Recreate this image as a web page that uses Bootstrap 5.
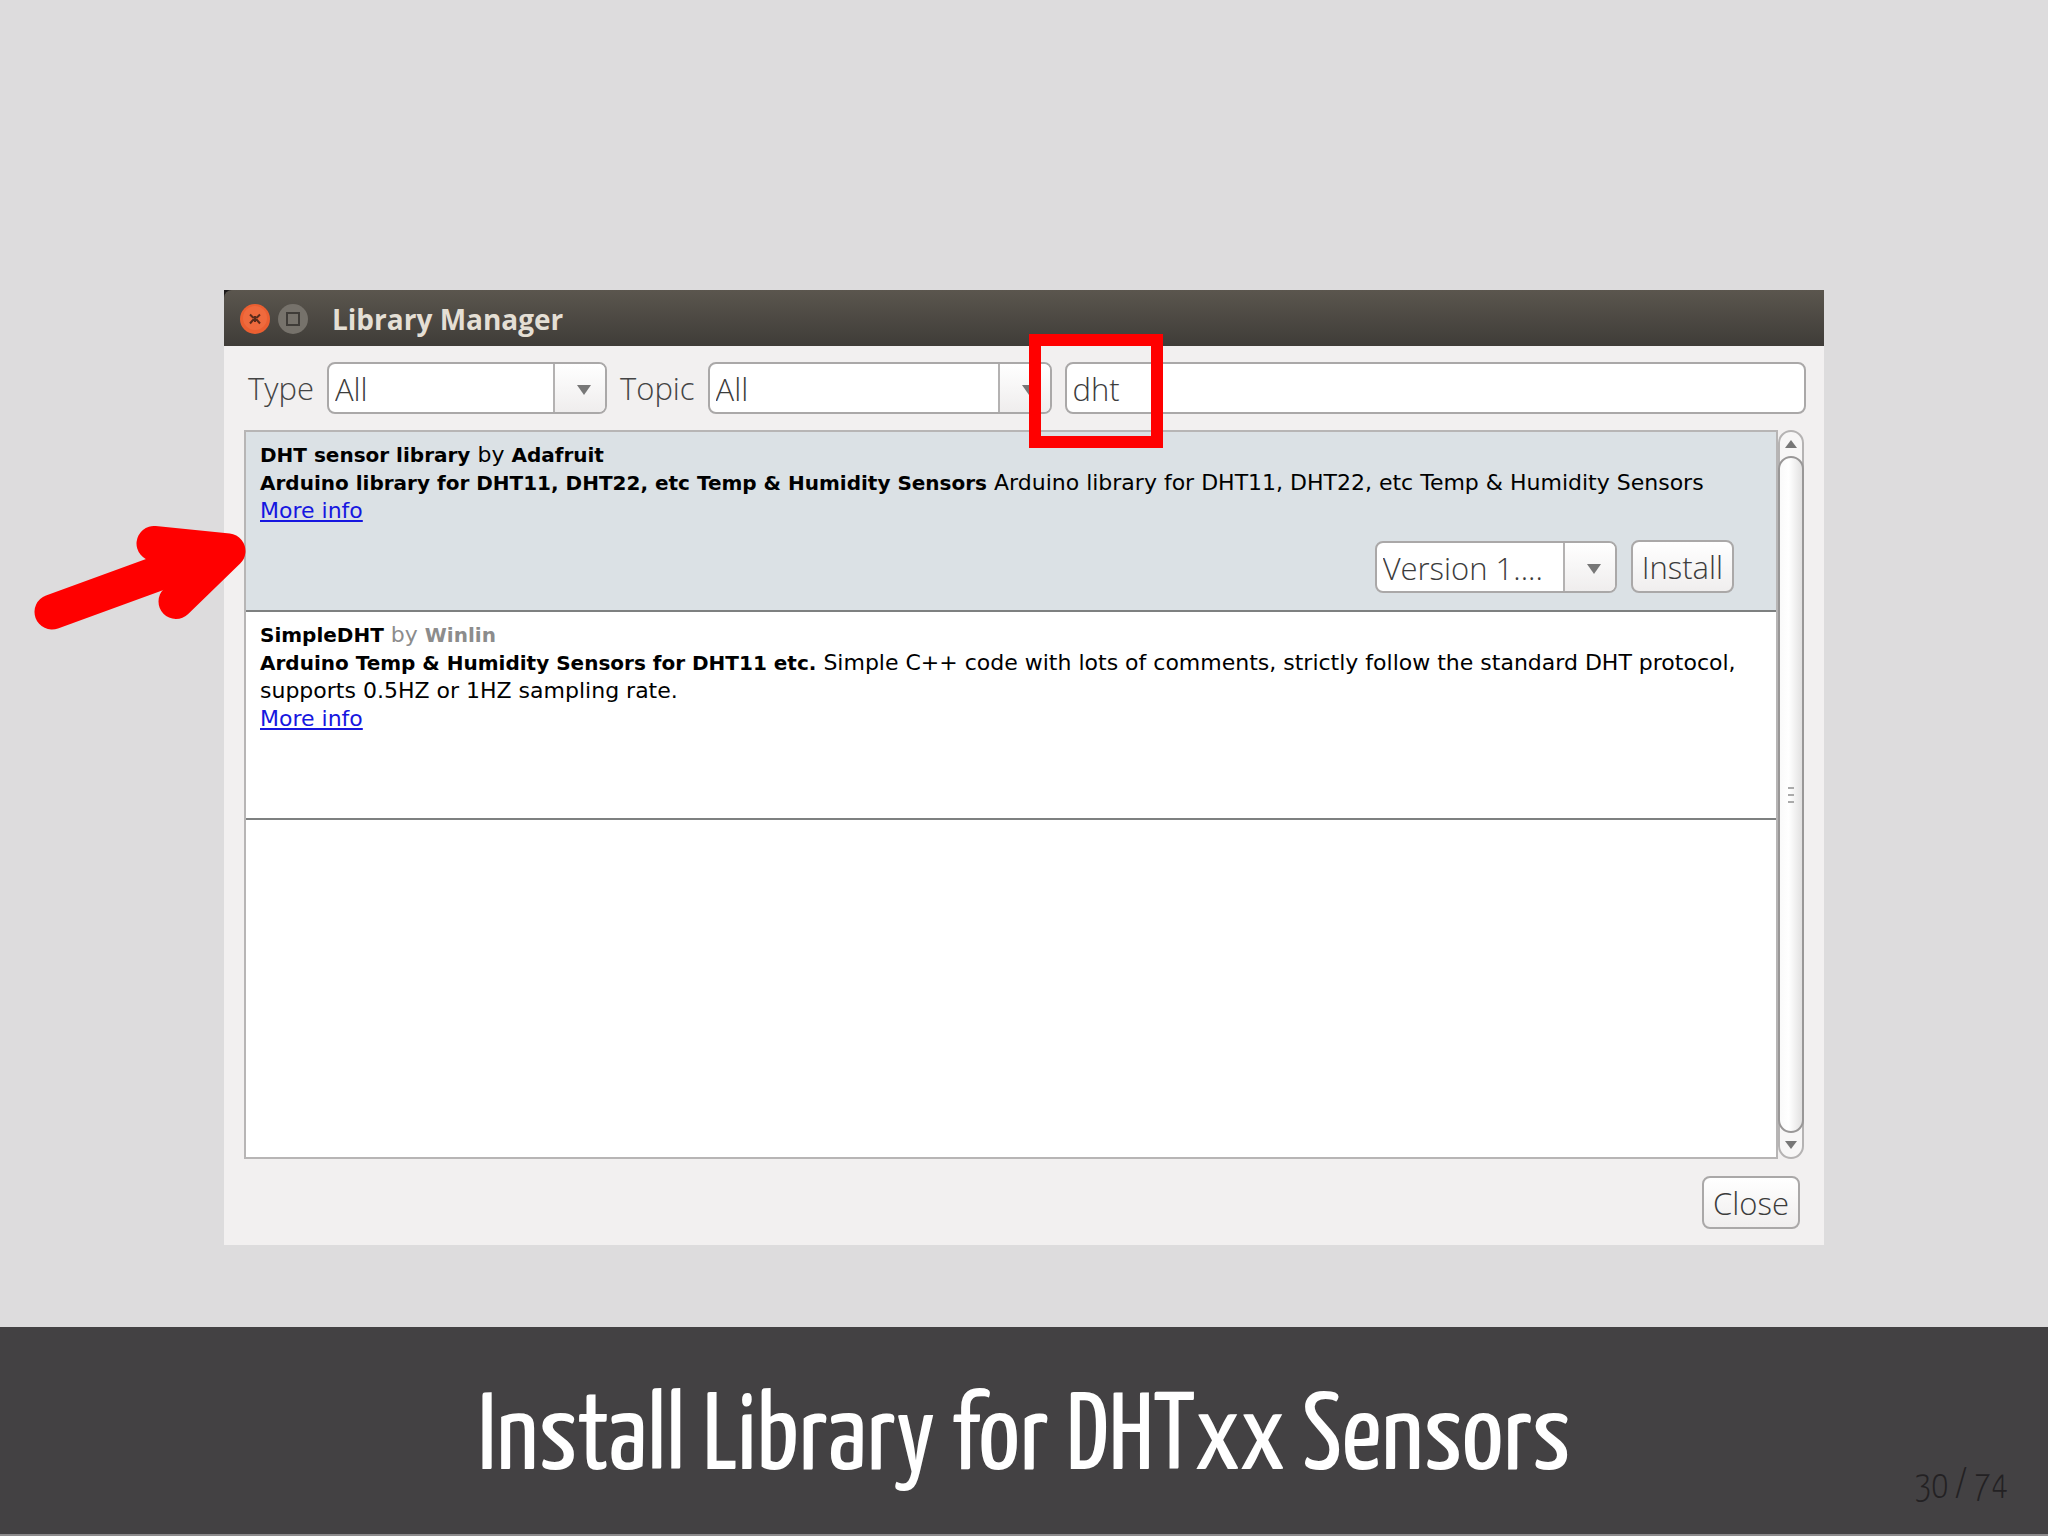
<!DOCTYPE html>
<html lang="en">
<head>
<meta charset="utf-8">
<meta name="viewport" content="width=device-width, initial-scale=1">
<title>Install Library for DHTxx Sensors</title>
<link rel="stylesheet" href="https://cdn.jsdelivr.net/npm/bootstrap@5.3.0/dist/css/bootstrap.min.css">
<script src="https://cdn.jsdelivr.net/npm/bootstrap@5.3.0/dist/js/bootstrap.bundle.min.js"></script>
<style>
  body { background: #dddcdd; font-family: "Open Sans", "Noto Sans", sans-serif; }
  .stage { padding-top: 290px; padding-bottom: 80px; }
  .app-window { max-width: 1600px; background: #f2f0f0; color: #444; font-size: 31px; font-weight: 300; line-height: 40px; }
  .titlebar { height: 56px; padding: 2px 16px 0; gap: 8px; background: linear-gradient(#5b564e, #3f3c38); border-top-left-radius: 8px; }
  .title-wrap { background: #1c1a1a; }
  .titlebar h1 { font-size: 28px; font-weight: 700; line-height: 40px; color: #e4dfd5; padding-left: 16px; }
  .win-btn { width: 30px; height: 30px; padding: 0; border: 0; background: none; line-height: 0; }
  .toolbar { padding: 16px 18px 16px 24px; gap: 13px; }
  .box, .push { border: 2px solid #aaa8a8; border-radius: 8px; color: #3c3c3c; background: #fff; font-family: "Open Sans", "Noto Sans", sans-serif; font-size: 31px; font-weight: 300; line-height: 40px; }
  .box { width: 100%; height: 52px; padding: 2px 6px 0; appearance: none; outline-offset: 2px; }
  .combo-type { width: 280px; }
  .combo-topic { width: 344px; }
  .combo-version { width: 242px; }
  .combo-pane { top: 2px; right: 2px; bottom: 2px; width: 52px; padding: 4px 0 0 8px; border-left: 2px solid #b4b2b2; border-radius: 0 6px 6px 0; background: linear-gradient(#fff, #efeded); pointer-events: none; }
  .push { height: 53px; padding: 0 9px; background: linear-gradient(#fff, #f0eeee); }
  .lists { padding: 0 20px; }
  .library-list { height: 729px; border: 2px solid #b7b5b5; background: #fff; color: #000; font-family: "DejaVu Sans", sans-serif; font-size: 22px; font-weight: 400; line-height: 28px; }
  .library { padding: 9px 14px; border-bottom: 2px solid #7e8080; }
  .library b { font-size: 20px; line-height: 20px; }
  .library a { color: #1616e0; }
  .picked { height: 180px; background: #dbe1e5; padding: 9px 42px 17px 14px; }
  .plain { height: 208px; padding-right: 36px; }
  .actions { gap: 14px; }
  .muted { color: #8c8c8c; }
  .scroller { width: 26px; border: 2px solid #b5b3b3; border-radius: 13px; background: #f7f6f6; }
  .arrow-end { height: 24px; }
  .thumb { margin: 0 -2px; border: 2px solid #999797; border-radius: 13px; background: linear-gradient(90deg, #fafafa, #fff 40%, #e2e1e1); }
  .window-foot { padding: 17px 24px 16px; }
  .search-mark { left: -36px; top: -28px; width: 134px; height: 114px; border: 12px solid #f00; pointer-events: none; }
  .pointer { left: -190px; top: 236px; pointer-events: none; }
  .caption-bar { height: 209px; padding-top: 18px; background: #434143; border-bottom: 2px solid #8c8a8c; font-family: "Yanone Kaffeesatz", "Open Sans Condensed", "Liberation Sans Narrow", "Open Sans", sans-serif; }
  .caption-bar h2 { font-size: 110px; line-height: 120px; font-weight: 400; color: #fff; }
  .page-no { right: 40px; bottom: 22px; font-size: 39px; line-height: 48px; font-weight: 300; font-variant-numeric: lining-nums; color: #232123; }
</style>
</head>
<body>
<div class="d-flex flex-column min-vh-100">
  <main class="stage flex-grow-1">
    <section class="app-window position-relative mx-auto" aria-label="Library Manager">
      <div class="title-wrap">
        <header class="titlebar d-flex align-items-center">
          <button class="win-btn" type="button" aria-label="Close window">
            <svg width="30" height="30" viewBox="0 0 30 30"><circle cx="15" cy="15" r="15" fill="#eb5f31"/><circle cx="15" cy="14" r="12" fill="#f3764a" opacity=".5"/><path d="M10 10.500l3 3h4l3-3M10 19.500l3-3.500h4l3 3.500M15 12v6" stroke="#5a2c1c" stroke-width="2" fill="none"/></svg>
          </button>
          <button class="win-btn" type="button" aria-label="Maximize window">
            <svg width="30" height="30" viewBox="0 0 30 30"><circle cx="15" cy="15" r="15" fill="#76726b"/><rect x="9" y="9" width="12" height="12" fill="none" stroke="#3f3c38" stroke-width="2"/></svg>
          </button>
          <h1 class="m-0">Library Manager</h1>
        </header>
      </div>

      <form class="toolbar d-flex align-items-center">
        <label for="type">Type</label>
        <div class="combo-type position-relative flex-shrink-0">
          <select class="box d-block" id="type"><option>All</option></select>
          <span class="combo-pane position-absolute d-flex align-items-center justify-content-center"><svg width="16" height="12" viewBox="0 0 16 12"><path d="M1 1h14L8 11z" fill="#777"/></svg></span>
        </div>
        <label for="topic">Topic</label>
        <div class="combo-topic position-relative flex-shrink-0">
          <select class="box d-block" id="topic"><option>All</option></select>
          <span class="combo-pane position-absolute d-flex align-items-center justify-content-center"><svg width="16" height="12" viewBox="0 0 16 12"><path d="M1 1h14L8 11z" fill="#777"/></svg></span>
        </div>
        <div class="position-relative flex-grow-1">
          <input class="box d-block" type="text" value="dht" aria-label="Filter your search">
          <span class="search-mark position-absolute"></span>
        </div>
      </form>

      <div class="lists d-flex">
        <div class="library-list flex-grow-1">
          <article class="library picked d-flex flex-column">
            <div><b>DHT sensor library</b> by <b>Adafruit</b></div>
            <div><b>Arduino library for DHT11, DHT22, etc Temp &amp; Humidity Sensors</b> Arduino library for DHT11, DHT22, etc Temp &amp; Humidity Sensors</div>
            <div><a href="#">More info</a></div>
            <div class="actions d-flex align-items-center justify-content-end mt-auto">
              <div class="combo-version position-relative">
                <select class="box d-block" aria-label="Version"><option>Version 1....</option></select>
                <span class="combo-pane position-absolute d-flex align-items-center justify-content-center"><svg width="16" height="12" viewBox="0 0 16 12"><path d="M1 1h14L8 11z" fill="#777"/></svg></span>
              </div>
              <button class="push" type="button">Install</button>
            </div>
          </article>
          <article class="library plain">
            <div><b>SimpleDHT</b> <span class="muted">by <b>Winlin</b></span></div>
            <div><b>Arduino Temp &amp; Humidity Sensors for DHT11 etc.</b> Simple C++ code with lots of comments, strictly follow the standard DHT protocol, supports 0.5HZ or 1HZ sampling rate.</div>
            <div><a href="#">More info</a></div>
          </article>
        </div>
        <div class="scroller d-flex flex-column flex-shrink-0">
          <div class="arrow-end d-flex align-items-center justify-content-center"><svg width="12" height="8" viewBox="0 0 12 8"><path d="M0 8h12L6 0z" fill="#777"/></svg></div>
          <div class="thumb flex-grow-1 d-flex align-items-center justify-content-center"><svg width="8" height="16" viewBox="0 0 8 16"><path d="M1 1h6M1 8h6M1 15h6" stroke="#aaa" stroke-width="2"/></svg></div>
          <div class="arrow-end d-flex align-items-center justify-content-center"><svg width="12" height="8" viewBox="0 0 12 8"><path d="M0 0h12L6 8z" fill="#777"/></svg></div>
        </div>
      </div>

      <div class="window-foot d-flex justify-content-end">
        <button class="push" type="button">Close</button>
      </div>

      <svg class="pointer position-absolute" width="212" height="104" viewBox="34 526 212 104" aria-hidden="true"><g stroke="#f00" stroke-width="35" stroke-linecap="round" stroke-linejoin="round"><path d="M52 612L200 558" fill="none"/><path d="M154 543.500L228 551L176 601.500" fill="#f00"/></g></svg>
    </section>
  </main>
  <footer class="caption-bar position-relative d-flex align-items-center justify-content-center">
    <h2 class="m-0">Install Library for DHTxx Sensors</h2>
    <span class="page-no position-absolute">30 / 74</span>
  </footer>
</div>
</body>
</html>
